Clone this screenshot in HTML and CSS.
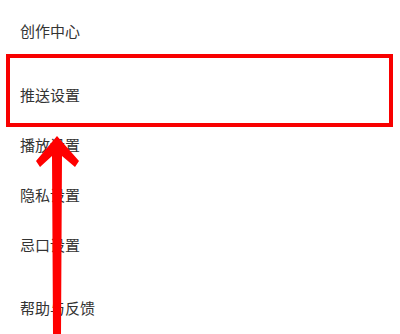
FILE: index.html
```html
<!DOCTYPE html>
<html lang="zh-CN">
<head>
    <meta charset="UTF-8">
    <meta name="viewport" content="width=device-width, initial-scale=1.0">
    <title>设置</title>
    <link rel="stylesheet" href="styles.css">
</head>
<body>
    <ul class="menu">
        <li class="menu-item">创作中心</li>
        <li class="menu-item push">推送设置</li>
        <li class="menu-item">播放设置</li>
        <li class="menu-item">隐私设置</li>
        <li class="menu-item">忌口设置</li>
        <li class="menu-item group-start">帮助与反馈</li>
    </ul>

    <!-- annotation: highlight box + arrow -->
    <div class="highlight"></div>
    <svg class="arrow" width="400" height="334" viewBox="0 0 400 334">
        <path d="M57,136 L79,161 L75,167 L62,156 L61,334 L53,334 L52,156 L40,167 L36,161 Z" fill="#ff0000"/>
    </svg>
</body>
</html>
```

FILE: styles.css
```css
body {
    margin: 0;
    background-color: #ffffff;
    font-family: "Noto Sans CJK SC", "Noto Sans", sans-serif;
    width: 400px;
    height: 334px;
    overflow: hidden;
    position: relative;
}

.menu {
    list-style: none;
    margin: 0;
    padding: 21px 0 0 20px;
    display: flex;
    flex-direction: column;
    gap: 30px;
}

.menu-item {
    font-size: 15px;
    line-height: 20px;
    color: #333333;
}

.menu-item.push {
    margin-top: 14px;
}

.menu-item.group-start {
    margin-top: 13px;
}

.highlight {
    position: absolute;
    left: 6px;
    top: 54px;
    width: 379px;
    height: 65px;
    border: 4px solid #f80000;
}

.arrow {
    position: absolute;
    left: 0;
    top: 0;
}
```
